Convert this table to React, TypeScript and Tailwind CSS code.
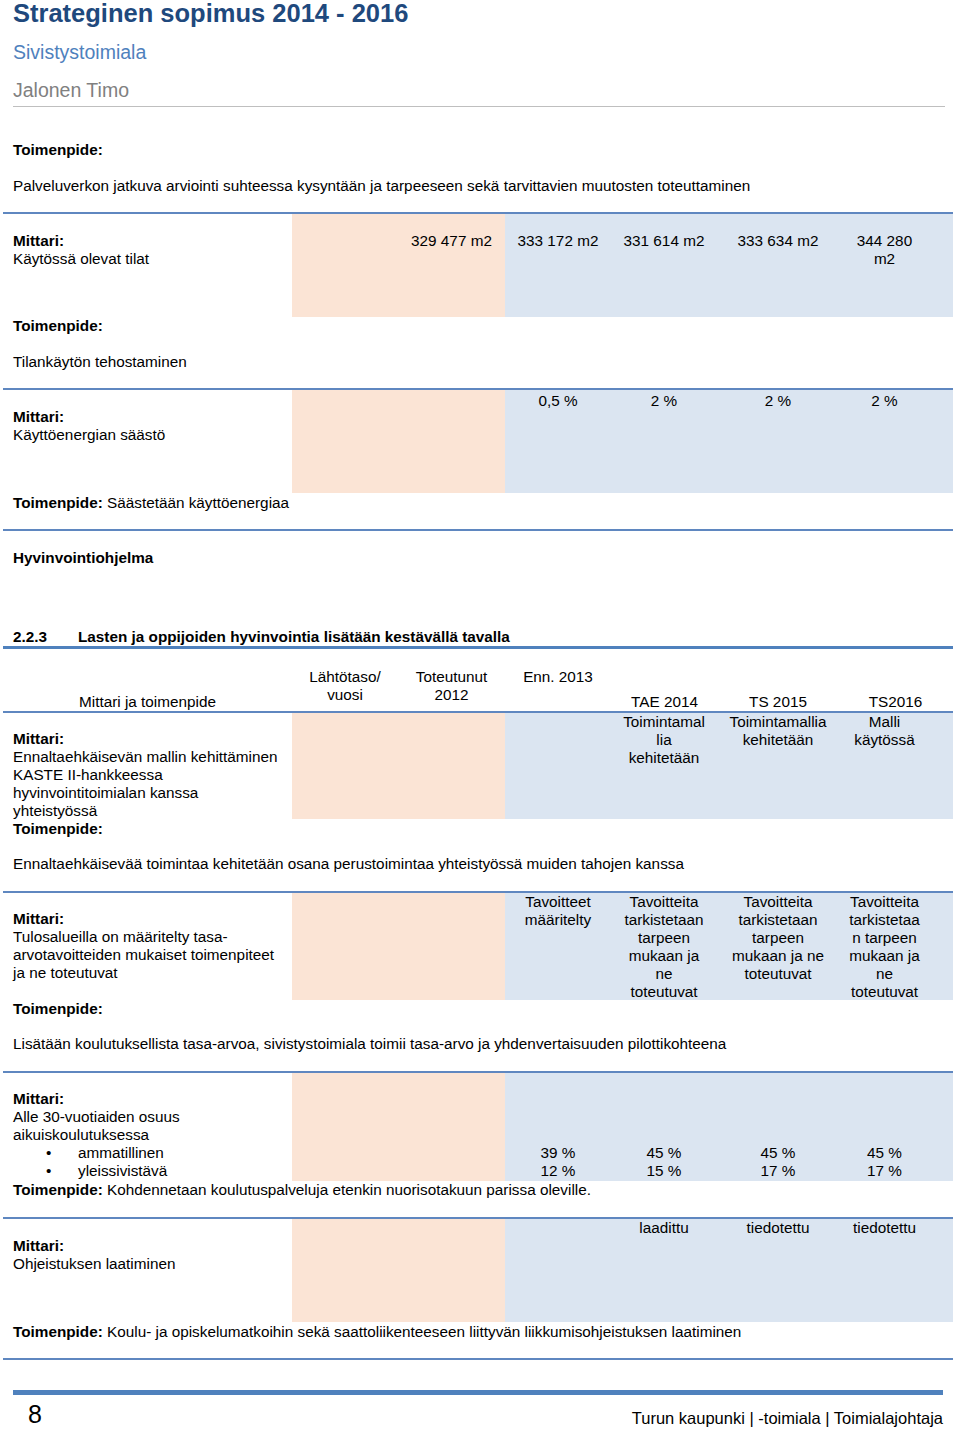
import React from "react";

const cols = "grid grid-cols-[289px_106px_107px_106px_107px_120px_115px]";
const pads = ["px-[5px]", "px-[5px]", "px-[5px]", "pl-[12px] pr-[13px]", "px-[7px]", "pl-[8px] pr-[30px]"];
const fills = ["bg-[#fbe4d5]", "bg-[#fbe4d5]", "bg-[#dbe5f1]", "bg-[#dbe5f1]", "bg-[#dbe5f1]", "bg-[#dbe5f1]"];

function Rule({ className = "" }: { className?: string }) {
  return <div className={`h-[2px] bg-[#5f87c0] ${className}`} />;
}

function Band({
  height,
  labelPad,
  valuePad,
  label,
  values,
}: {
  height: string;
  labelPad: string;
  valuePad: string;
  label: React.ReactNode;
  values: React.ReactNode[];
}) {
  return (
    <div className={cols}>
      <div className={`pl-[10px] pr-[7px] ${labelPad}`}>{label}</div>
      {values.map((v, i) => (
        <div key={i} className={`${height} ${fills[i]} ${pads[i]} ${valuePad} self-start text-center break-words`}>
          {v}
        </div>
      ))}
    </div>
  );
}

function B({ children }: { children: React.ReactNode }) {
  return <span className="font-bold">{children}</span>;
}

export default function App() {
  return (
    <div className="w-[960px] h-[1429px] overflow-hidden bg-white text-black font-['Liberation_Sans',Arial,sans-serif] text-[15.3px] leading-[18px]">
      <div className="px-[13px]">
        <h1 className="pt-[1px] text-[25.5px] leading-[24px] font-bold text-[#1f497d]">Strateginen sopimus 2014 - 2016</h1>
        <p className="mt-[15px] text-[19.5px] leading-[24px] text-[#4f81bd]">Sivistystoimiala</p>
        <p className="mt-[14px] text-[19.5px] leading-[24px] text-[#808080]">Jalonen Timo</p>
        <div className="mt-[4px] w-[932px] h-[1px] bg-[#bfbfbf]" />
      </div>

      <div className="ml-[3px] w-[950px]">
        <p className="pl-[10px] mt-[34px] font-bold">Toimenpide:</p>
        <p className="pl-[10px] mt-[18px]">
          Palveluverkon jatkuva arviointi suhteessa kysyntään ja tarpeeseen sekä tarvittavien muutosten toteuttaminen
        </p>
        <Rule className="mt-[17px]" />
        <Band
          height="h-[103px]"
          labelPad="pt-[18px]"
          valuePad="pt-[18px]"
          label={
            <>
              <p className="font-bold">Mittari:</p>
              <p>Käytössä olevat tilat</p>
            </>
          }
          values={["", "329 477 m2", "333 172 m2", "331 614 m2", "333 634 m2", "344 280 m2"]}
        />
        <p className="pl-[10px] font-bold">Toimenpide:</p>
        <p className="pl-[10px] mt-[18px]">Tilankäytön tehostaminen</p>
        <Rule className="mt-[17px]" />
        <Band
          height="h-[103px]"
          labelPad="pt-[18px]"
          valuePad="pt-[2px]"
          label={
            <>
              <p className="font-bold">Mittari:</p>
              <p>Käyttöenergian säästö</p>
            </>
          }
          values={["", "", "0,5 %", "2 %", "2 %", "2 %"]}
        />
        <p className="pl-[10px] mt-[1px]">
          <B>Toimenpide:</B> Säästetään käyttöenergiaa
        </p>
        <Rule className="mt-[17px]" />
        <p className="pl-[10px] mt-[18px] font-bold">Hyvinvointiohjelma</p>

        <p className="pl-[10px] mt-[61px] font-bold flex">
          <span className="w-[65px]">2.2.3</span>
          <span>Lasten ja oppijoiden hyvinvointia lisätään kestävällä tavalla</span>
        </p>
        <div className="h-[3px] bg-[#4f81bd]" />

        <div className={`${cols} h-[62px]`}>
          <div className="self-end text-center">Mittari ja toimenpide</div>
          <div className="pt-[19px] px-[5px] text-center">Lähtötaso/ vuosi</div>
          <div className="pt-[19px] px-[5px] text-center">Toteutunut 2012</div>
          <div className="pt-[19px] px-[5px] text-center">Enn. 2013</div>
          <div className="self-end text-center">TAE 2014</div>
          <div className="self-end text-center">TS 2015</div>
          <div className="self-end text-center">TS2016</div>
        </div>
        <Rule />
        <Band
          height="h-[106px]"
          labelPad="pt-[17px]"
          valuePad="pt-0"
          label={
            <>
              <p className="font-bold">Mittari:</p>
              <p>Ennaltaehkäisevän mallin kehittäminen KASTE II-hankkeessa hyvinvointitoimialan kanssa yhteistyössä</p>
            </>
          }
          values={["", "", "", "Toimintamallia kehitetään", "Toimintamallia kehitetään", "Malli käytössä"]}
        />
        <p className="pl-[10px] font-bold">Toimenpide:</p>
        <p className="pl-[10px] mt-[17px]">
          Ennaltaehkäisevää toimintaa kehitetään osana perustoimintaa yhteistyössä muiden tahojen kanssa
        </p>
        <Rule className="mt-[18px]" />
        <Band
          height="h-[107px]"
          labelPad="pt-[17px]"
          valuePad="pt-0"
          label={
            <>
              <p className="font-bold">Mittari:</p>
              <p>Tulosalueilla on määritelty tasa-arvotavoitteiden mukaiset toimenpiteet ja ne toteutuvat</p>
            </>
          }
          values={[
            "",
            "",
            "Tavoitteet määritelty",
            "Tavoitteita tarkistetaan tarpeen mukaan ja ne toteutuvat",
            "Tavoitteita tarkistetaan tarpeen mukaan ja ne toteutuvat",
            "Tavoitteita tarkistetaan tarpeen mukaan ja ne toteutuvat",
          ]}
        />
        <p className="pl-[10px] font-bold">Toimenpide:</p>
        <p className="pl-[10px] mt-[17px]">
          Lisätään koulutuksellista tasa-arvoa, sivistystoimiala toimii tasa-arvo ja yhdenvertaisuuden pilottikohteena
        </p>
        <Rule className="mt-[18px]" />
        <Band
          height="h-[108px]"
          labelPad="pt-[17px]"
          valuePad="pt-[71px]"
          label={
            <>
              <p className="font-bold">Mittari:</p>
              <p>Alle 30-vuotiaiden osuus aikuiskoulutuksessa</p>
              <ul>
                <li className="flex">
                  <span className="w-[65px] pl-[33px]">•</span>
                  <span>ammatillinen</span>
                </li>
                <li className="flex">
                  <span className="w-[65px] pl-[33px]">•</span>
                  <span>yleissivistävä</span>
                </li>
              </ul>
            </>
          }
          values={[
            "",
            "",
            <>39 %<br />12 %</>,
            <>45 %<br />15 %</>,
            <>45 %<br />17 %</>,
            <>45 %<br />17 %</>,
          ]}
        />
        <p className="pl-[10px]">
          <B>Toimenpide:</B> Kohdennetaan koulutuspalveluja etenkin nuorisotakuun parissa oleville.
        </p>
        <Rule className="mt-[18px]" />
        <Band
          height="h-[103px]"
          labelPad="pt-[18px]"
          valuePad="pt-0"
          label={
            <>
              <p className="font-bold">Mittari:</p>
              <p>Ohjeistuksen laatiminen</p>
            </>
          }
          values={["", "", "", "laadittu", "tiedotettu", "tiedotettu"]}
        />
        <p className="pl-[10px] mt-[1px]">
          <B>Toimenpide:</B> Koulu- ja opiskelumatkoihin sekä saattoliikenteeseen liittyvän liikkumisohjeistuksen laatiminen
        </p>
        <Rule className="mt-[17px]" />
      </div>

      <div className="mx-[13px] mt-[30px] h-[5px] w-[930px] bg-[#4f81bd]" />
      <div className="flex justify-between items-start w-[943px]">
        <span className="ml-[28px] mt-[7px] text-[25px] leading-[24px]">8</span>
        <span className="mt-[13px] text-[16.5px] leading-[20px]">Turun kaupunki | -toimiala | Toimialajohtaja</span>
      </div>
    </div>
  );
}
